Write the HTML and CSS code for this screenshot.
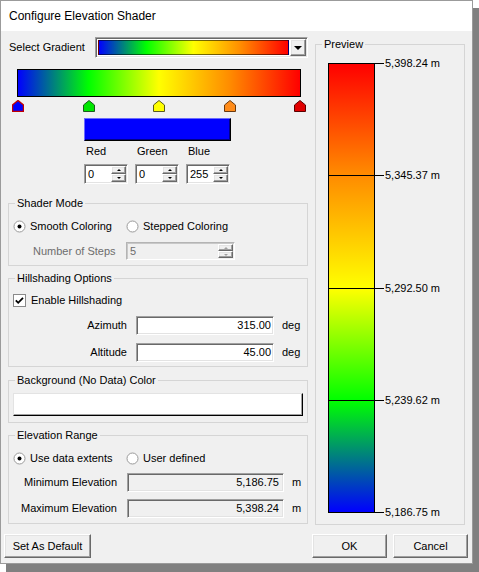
FILE: index.html
```html
<!DOCTYPE html>
<html lang="en">

<head>
    <meta charset="UTF-8">
    <meta name="viewport" content="width=device-width, initial-scale=1.0">
    <title>Configure Elevation Shader</title>
    <link rel="stylesheet" href="styles.css">
</head>

<body>
    <div class="window">
        <div class="titlebar">Configure Elevation Shader</div>

        <div class="dialog-body">
            <div class="left-col">
                <!-- gradient picker -->
                <div class="gradient-row">
                    <span class="gradient-label">Select Gradient</span>
                    <div class="combo">
                        <div class="combo-value">
                            <div class="combo-gradient"></div>
                        </div>
                        <div class="combo-button"><span class="arrow-down"></span></div>
                    </div>
                </div>

                <div class="gradient-bar"></div>

                <div class="stops">
                    <svg class="stop" width="12" height="12" viewBox="0 0 12 12"><polygon points="6,0.5 11.5,5 11.5,11.5 0.5,11.5 0.5,5" fill="#0000ff" stroke="#c00000" stroke-width="1.4"/></svg>
                    <svg class="stop" width="12" height="12" viewBox="0 0 12 12"><polygon points="6,0.5 11.5,5 11.5,11.5 0.5,11.5 0.5,5" fill="#00e600" stroke="#1e5a1e"/></svg>
                    <svg class="stop" width="12" height="12" viewBox="0 0 12 12"><polygon points="6,0.5 11.5,5 11.5,11.5 0.5,11.5 0.5,5" fill="#ffff00" stroke="#5a5a1e"/></svg>
                    <svg class="stop" width="12" height="12" viewBox="0 0 12 12"><polygon points="6,0.5 11.5,5 11.5,11.5 0.5,11.5 0.5,5" fill="#ff8c1a" stroke="#6a3a10"/></svg>
                    <svg class="stop" width="12" height="12" viewBox="0 0 12 12"><polygon points="6,0.5 11.5,5 11.5,11.5 0.5,11.5 0.5,5" fill="#e00000" stroke="#5a0000"/></svg>
                </div>

                <div class="swatch"></div>

                <div class="rgb-row">
                    <div class="rgb-item">
                        <div class="rgb-label">Red</div>
                        <div class="spinner">
                            <span class="spinner-value">0</span>
                            <div class="spin-buttons">
                                <span class="spin-btn"><i class="tri-up"></i></span>
                                <span class="spin-btn"><i class="tri-down"></i></span>
                            </div>
                        </div>
                    </div>
                    <div class="rgb-item">
                        <div class="rgb-label">Green</div>
                        <div class="spinner">
                            <span class="spinner-value">0</span>
                            <div class="spin-buttons">
                                <span class="spin-btn"><i class="tri-up"></i></span>
                                <span class="spin-btn"><i class="tri-down"></i></span>
                            </div>
                        </div>
                    </div>
                    <div class="rgb-item">
                        <div class="rgb-label">Blue</div>
                        <div class="spinner">
                            <span class="spinner-value">255</span>
                            <div class="spin-buttons">
                                <span class="spin-btn"><i class="tri-up"></i></span>
                                <span class="spin-btn"><i class="tri-down"></i></span>
                            </div>
                        </div>
                    </div>
                </div>

                <!-- shader mode -->
                <fieldset class="group shader-group">
                    <legend>Shader Mode</legend>
                    <div class="radio-row">
                        <label class="option option-first">
                            <svg class="radio" width="13" height="13" viewBox="0 0 13 13"><circle cx="6.5" cy="6.5" r="5.5" fill="#fff" stroke="#9a9a9a"/><circle cx="6.5" cy="6.5" r="2" fill="#000"/></svg>
                            Smooth Coloring
                        </label>
                        <label class="option">
                            <svg class="radio" width="13" height="13" viewBox="0 0 13 13"><circle cx="6.5" cy="6.5" r="5.5" fill="#fff" stroke="#9a9a9a"/></svg>
                            Stepped Coloring
                        </label>
                    </div>
                    <div class="steps-row">
                        <span class="steps-label">Number of Steps</span>
                        <div class="spinner spinner-wide disabled">
                            <span class="spinner-value">5</span>
                            <div class="spin-buttons">
                                <span class="spin-btn"><i class="tri-up"></i></span>
                                <span class="spin-btn"><i class="tri-down"></i></span>
                            </div>
                        </div>
                    </div>
                </fieldset>

                <!-- hillshading -->
                <fieldset class="group hill-group">
                    <legend>Hillshading Options</legend>
                    <label class="check-row">
                        <svg class="check" width="13" height="13" viewBox="0 0 13 13"><rect x="0.5" y="0.5" width="12" height="12" fill="#fff" stroke="#8a8a8a"/><polyline points="2.8,6.3 5.2,8.8 10,3.8" fill="none" stroke="#000" stroke-width="1.8"/></svg>
                        Enable Hillshading
                    </label>
                    <div class="field-row azimuth-row">
                        <span class="field-label">Azimuth</span>
                        <div class="field">315.00</div>
                        <span class="unit">deg</span>
                    </div>
                    <div class="field-row altitude-row">
                        <span class="field-label">Altitude</span>
                        <div class="field">45.00</div>
                        <span class="unit">deg</span>
                    </div>
                </fieldset>

                <!-- background color -->
                <fieldset class="group bg-group">
                    <legend>Background (No Data) Color</legend>
                    <div class="color-button"></div>
                </fieldset>

                <!-- elevation range -->
                <fieldset class="group range-group">
                    <legend>Elevation Range</legend>
                    <div class="radio-row">
                        <label class="option option-first">
                            <svg class="radio" width="13" height="13" viewBox="0 0 13 13"><circle cx="6.5" cy="6.5" r="5.5" fill="#fff" stroke="#9a9a9a"/><circle cx="6.5" cy="6.5" r="2" fill="#000"/></svg>
                            Use data extents
                        </label>
                        <label class="option">
                            <svg class="radio" width="13" height="13" viewBox="0 0 13 13"><circle cx="6.5" cy="6.5" r="5.5" fill="#fff" stroke="#9a9a9a"/></svg>
                            User defined
                        </label>
                    </div>
                    <div class="range-row min-row">
                        <span class="range-label">Minimum Elevation</span>
                        <div class="field readonly">5,186.75</div>
                        <span class="unit">m</span>
                    </div>
                    <div class="range-row max-row">
                        <span class="range-label">Maximum Elevation</span>
                        <div class="field readonly">5,398.24</div>
                        <span class="unit">m</span>
                    </div>
                </fieldset>
            </div>

            <!-- preview -->
            <fieldset class="group preview-group">
                <legend>Preview</legend>
                <div class="scale">
                    <div class="scale-bar">
                        <div class="scale-seg seg-1"></div>
                        <div class="scale-seg seg-2"></div>
                        <div class="scale-seg seg-3"></div>
                        <div class="scale-seg seg-4"></div>
                    </div>
                    <div class="scale-ticks">
                        <div class="tick"><span class="tick-line"></span>5,398.24 m</div>
                        <div class="tick"><span class="tick-line"></span>5,345.37 m</div>
                        <div class="tick"><span class="tick-line"></span>5,292.50 m</div>
                        <div class="tick"><span class="tick-line"></span>5,239.62 m</div>
                        <div class="tick"><span class="tick-line"></span>5,186.75 m</div>
                    </div>
                </div>
            </fieldset>
        </div>

        <div class="footer">
            <button class="btn btn-default">Set As Default</button>
            <button class="btn btn-ok">OK</button>
            <button class="btn btn-cancel">Cancel</button>
        </div>
    </div>
</body>

</html>
```

FILE: styles.css
```css
*,
*::before,
*::after {
    box-sizing: border-box;
}

html,
body {
    height: 572px;
}

body {
    margin: 0;
    background: #fff;
    font-family: "Liberation Sans", Arial, sans-serif;
    font-size: 11px;
    line-height: 13px;
    color: #000;
    overflow: hidden;
}

.window {
    width: 473px;
    height: 564px;
    border: 1px solid #9b9b9b;
    background: #f0f0f0;
    box-shadow: 6px 8px 0 #808080;
}

.titlebar {
    height: 30px;
    background: #fff;
    font-size: 12px;
    line-height: 30px;
    padding-left: 8px;
}

.dialog-body {
    display: grid;
    grid-template-columns: 300px 150px;
    column-gap: 7px;
    align-items: start;
    padding: 6px 0 0 7px;
}

/* ---- sunken / raised borders, classic look ---- */
.combo,
.spinner,
.field {
    border: 1px solid;
    border-color: #a0a0a0 #fff #fff #a0a0a0;
    box-shadow: inset 1px 1px #696969, inset -1px -1px #e3e3e3;
}

.combo-button,
.spin-btn,
.btn {
    border: 1px solid;
    border-color: #fff #696969 #696969 #fff;
    box-shadow: inset -1px -1px #a0a0a0, inset 1px 1px #e3e3e3;
    background: #f0f0f0;
}

/* ---- gradient picker ---- */
.gradient-row {
    display: flex;
    align-items: center;
    height: 21px;
}

.gradient-label {
    width: 87px;
    padding-left: 1px;
}

.combo {
    flex: 1;
    height: 21px;
    display: flex;
    background: #fff;
    padding: 1px;
}

.combo-value {
    flex: 1;
    padding: 1px;
}

.combo-gradient {
    height: 100%;
    border: 1px solid rgba(0, 0, 0, 0.55);
    background: linear-gradient(to right, #0000ff, #00ff00 25%, #ffff00 50%, #ff8c00 75%, #ff0000);
}

.combo-button {
    width: 16px;
    display: flex;
    align-items: center;
    justify-content: center;
}

.arrow-down {
    width: 0;
    height: 0;
    border-left: 4px solid transparent;
    border-right: 4px solid transparent;
    border-top: 4px solid #000;
}

.gradient-bar {
    margin: 11px 0 0 9px;
    width: 284px;
    height: 28px;
    border: 1px solid #000;
    background: linear-gradient(to right, #0000ff, #00ff00 25%, #ffff00 50%, #ff8c00 75%, #ff0000);
}

.stops {
    display: flex;
    justify-content: space-between;
    width: 294px;
    margin: 3px 0 0 4px;
}

.stop {
    display: block;
}

.swatch {
    margin: 6px 0 0 76px;
    width: 147px;
    height: 23px;
    background: #0000ff;
    border: 1px solid;
    border-color: #6a6aff #000 #000 #6a6aff;
    box-shadow: inset -1px -1px #00008a;
}

.rgb-row {
    display: flex;
    gap: 7px;
    margin: 4px 0 0 76px;
}

.rgb-item {
    width: 44px;
}

.rgb-label {
    padding-left: 2px;
}

.rgb-item .spinner {
    margin-top: 6px;
}

/* ---- spinner ---- */
.spinner {
    display: flex;
    height: 20px;
    background: #fff;
    padding: 1px;
}

.spinner-value {
    flex: 1;
    padding-left: 2px;
    line-height: 16px;
}

.spin-buttons {
    width: 15px;
    display: flex;
    flex-direction: column;
}

.spin-btn {
    flex: 1;
    display: flex;
    align-items: center;
    justify-content: center;
}

.tri-up,
.tri-down {
    width: 0;
    height: 0;
    border-left: 2px solid transparent;
    border-right: 2px solid transparent;
}

.tri-up {
    border-bottom: 2px solid #000;
}

.tri-down {
    border-top: 2px solid #000;
}

.spinner.disabled {
    background: #f0f0f0;
    color: #6d6d6d;
    border-color: #b4b4b4 #fff #fff #b4b4b4;
    box-shadow: inset 1px 1px #c8c8c8;
}

.spinner.disabled .tri-up {
    border-bottom-color: #a0a0a0;
}

.spinner.disabled .tri-down {
    border-top-color: #a0a0a0;
}

.spinner-wide {
    width: 109px;
    height: 18px;
}

.spinner-wide .spinner-value {
    line-height: 14px;
}

/* ---- group boxes ---- */
.group {
    margin: 0;
    padding: 0 4px;
    border: 1px solid #d5d5d5;
    min-width: 0;
}

.group legend {
    padding: 0 2px;
    margin-left: 2px;
    line-height: 13px;
}

.shader-group {
    margin-top: 13px;
    padding-bottom: 5px;
}

.hill-group {
    margin-top: 6px;
    padding-bottom: 4px;
}

.bg-group {
    margin-top: 7px;
    padding-bottom: 6px;
}

.range-group {
    margin-top: 6px;
    padding-bottom: 5px;
}

.radio-row {
    display: flex;
    margin-top: 10px;
}

.option {
    display: flex;
    align-items: center;
    gap: 4px;
}

.option-first {
    width: 113px;
}

.radio,
.check {
    display: block;
}

.steps-row {
    display: flex;
    align-items: center;
    margin-top: 9px;
}

.steps-label {
    width: 113px;
    padding-left: 20px;
    color: #6d6d6d;
}

.check-row {
    display: flex;
    align-items: center;
    gap: 5px;
    margin-top: 9px;
}

/* ---- text fields ---- */
.field-row,
.range-row {
    display: flex;
    align-items: center;
}

.azimuth-row {
    margin-top: 9px;
}

.altitude-row {
    margin-top: 8px;
}

.field-label {
    width: 114px;
    text-align: right;
}

.field {
    height: 19px;
    background: #fff;
    text-align: right;
    padding-right: 2px;
    line-height: 17px;
}

.field-row .field {
    width: 138px;
    margin-left: 9px;
}

.unit {
    margin-left: 8px;
}

.range-label {
    width: 104px;
    text-align: right;
}

.range-row .field {
    width: 157px;
    margin-left: 10px;
}

.field.readonly {
    background: #f0f0f0;
    padding-right: 4px;
}

.min-row {
    margin-top: 8px;
}

.max-row {
    margin-top: 7px;
}

.color-button {
    margin-top: 6px;
    height: 23px;
    background: #fff;
    border: 1px solid;
    border-color: #e3e3e3 #000 #000 #e3e3e3;
    box-shadow: inset -1px -1px #a0a0a0;
}

/* ---- preview scale ---- */
.preview-group {
    margin-top: 1px;
    padding-bottom: 11px;
}

.scale {
    display: flex;
    align-items: flex-start;
    margin: 12px 0 0 8px;
}

.scale-bar {
    width: 47px;
    height: 450px;
    border: 1px solid #000;
    display: flex;
    flex-direction: column;
}

.scale-seg {
    flex: 1;
}

.scale-seg + .scale-seg {
    border-top: 1px solid #000;
}

.seg-1 {
    background: linear-gradient(to bottom, #ff0000, #ff8c00);
}

.seg-2 {
    background: linear-gradient(to bottom, #ff8c00, #ffff00);
}

.seg-3 {
    background: linear-gradient(to bottom, #ffff00, #00ff00);
}

.seg-4 {
    background: linear-gradient(to bottom, #00ff00, #0000ff);
}

.scale-ticks {
    height: 462px;
    margin: -6px 0 -6px 0;
    display: flex;
    flex-direction: column;
    justify-content: space-between;
}

.tick {
    display: flex;
    align-items: center;
    height: 13px;
    white-space: nowrap;
}

.tick-line {
    width: 9px;
    height: 1px;
    background: #000;
    margin-right: 1px;
}

/* ---- footer buttons ---- */
.footer {
    display: flex;
    gap: 6px;
    margin-top: 9px;
    padding: 0 4px 0 3px;
}

.btn {
    height: 24px;
    padding: 0;
    font-family: inherit;
    font-size: 11px;
    color: #000;
}

.btn-default {
    width: 87px;
    margin-right: auto;
}

.btn-ok,
.btn-cancel {
    width: 75px;
}
```
